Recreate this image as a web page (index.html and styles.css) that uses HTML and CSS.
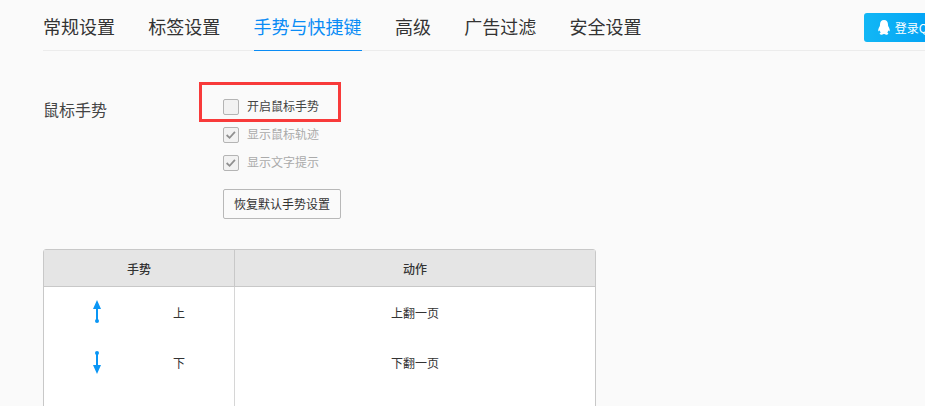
FILE: index.html
```html
<!DOCTYPE html>
<html lang="zh-CN">
<head>
<meta charset="utf-8">
<title>设置</title>
<link rel="stylesheet" href="styles.css">
</head>
<body>
<div class="page">
  <nav class="nav">
    <a class="tab">常规设置</a>
    <a class="tab">标签设置</a>
    <a class="tab active">手势与快捷键</a>
    <a class="tab">高级</a>
    <a class="tab">广告过滤</a>
    <a class="tab">安全设置</a>
    <button class="login">
      <svg class="qq" viewBox="0 0 12 15" width="12" height="15"><path d="M6 0C3.300 0 2 2 2 4.500C2 5.300 2 5.700 1.600 6.400C.8 7.800 0 9.300 .3 10.900C.5 11.500 1.200 10.900 1.600 10.200C1.800 11.100 2.200 11.900 2.800 12.500C2.100 12.800 1.500 13.200 1.800 13.900C2.100 14.600 3.500 14.800 4.700 14.600C5.100 14.500 5.400 14.300 5.500 14.100H6.500C6.600 14.300 6.900 14.500 7.300 14.600C8.500 14.800 9.900 14.600 10.200 13.900C10.500 13.200 9.900 12.800 9.200 12.500C9.800 11.900 10.200 11.100 10.400 10.200C10.800 10.900 11.500 11.500 11.700 10.900C12 9.300 11.200 7.800 10.400 6.400C10 5.700 10 5.300 10 4.500C10 2 8.700 0 6 0Z" fill="#fff"/></svg>
      <span class="login-text">登录QQ</span>
    </button>
  </nav>

  <section class="gesture">
    <div class="gesture-title">鼠标手势</div>
    <div class="options">
      <label class="option on"><span class="box"></span><span class="label">开启鼠标手势</span></label>
      <label class="option off"><span class="box"><svg viewBox="0 0 16 16" width="14" height="14"><path d="M3 8l3.400 3.200L12.500 4.500" fill="none" stroke="#8f8f8f" stroke-width="2"/></svg></span><span class="label">显示鼠标轨迹</span></label>
      <label class="option off"><span class="box"><svg viewBox="0 0 16 16" width="14" height="14"><path d="M3 8l3.400 3.200L12.500 4.500" fill="none" stroke="#8f8f8f" stroke-width="2"/></svg></span><span class="label">显示文字提示</span></label>
      <button class="reset">恢复默认手势设置</button>
      <div class="highlight"></div>
    </div>
  </section>

  <div class="table">
    <div class="row head">
      <div class="col-gesture">手势</div>
      <div class="col-action">动作</div>
    </div>
    <div class="row">
      <div class="col-gesture gesture-cell">
        <svg class="arrow" viewBox="0 0 8 24" width="8" height="24"><path d="M4 0L8 9H5V20H3V9H0Z" fill="#0a96f5"/><circle cx="4" cy="21" r="2" fill="#0a96f5"/></svg>
        <span class="dir">上</span>
      </div>
      <div class="col-action">上翻一页</div>
    </div>
    <div class="row">
      <div class="col-gesture gesture-cell">
        <svg class="arrow" viewBox="0 0 8 24" width="8" height="24"><path d="M4 24L8 15H5V4H3V15H0Z" fill="#0a96f5"/><circle cx="4" cy="3" r="2" fill="#0a96f5"/></svg>
        <span class="dir">下</span>
      </div>
      <div class="col-action">下翻一页</div>
    </div>
    <div class="row">
      <div class="col-gesture"></div>
      <div class="col-action"></div>
    </div>
  </div>
</div>
</body>
</html>
```

FILE: styles.css
```css
* { box-sizing: border-box; }
html, body { margin: 0; height: 100%; }
body {
  background: #fafafa;
  color: #333;
  font-family: "Noto Sans CJK SC", "Liberation Sans", sans-serif;
  overflow: hidden;
}
.page { width: 925px; height: 406px; overflow: hidden; padding-left: 43px; }

.nav {
  display: flex;
  width: 960px;
  height: 51px;
  border-bottom: 1px solid #ececec;
  gap: 33.300px;
  align-items: stretch;
}
.tab {
  font-size: 18px;
  line-height: 53px;
  height: 51px;
  color: #333;
  white-space: nowrap;
}
.tab.active { color: #0a8cf5; border-bottom: 1px solid #0a8cf5; }
.login {
  margin: 13px 0 0 189px;
  width: 76px;
  height: 29px;
  border: 0;
  border-radius: 3px;
  background: linear-gradient(90deg, #12b7f5, #00a0f5);
  color: #fff;
  display: flex;
  align-items: center;
  padding: 0 0 0 14px;
  font: inherit;
  font-size: 12px;
  white-space: nowrap;
}
.qq { flex: none; margin-right: 5px; }

.gesture { display: flex; padding-top: 46px; }
.gesture-title { width: 180px; font-size: 16px; line-height: 24px; color: #444; }
.options { position: relative; display: flex; flex-direction: column; align-items: flex-start; }
.option {
  display: flex;
  align-items: center;
  height: 16px;
  margin-top: 2px;
  margin-bottom: 10px;
  font-size: 12px;
  line-height: 15px;
}
.label { padding-bottom: 3px; }
.option.on { color: #444; }
.option.off { color: #aaa; }
.box {
  width: 16px;
  height: 16px;
  margin-right: 8px;
  border: 1px solid #b4b4b4;
  border-radius: 2px;
  background: #f2f2f2;
  display: flex;
  align-items: center;
  justify-content: center;
}
.reset {
  margin-top: 8px;
  width: 118px;
  height: 30px;
  padding: 0 0 1px;
  border: 1px solid #b8b8b8;
  border-radius: 2px;
  background: #fafafa;
  color: #333;
  font: inherit;
  font-size: 12px;
}
.highlight {
  position: absolute;
  left: -24px;
  top: -15px;
  width: 142px;
  height: 40px;
  border: 3px solid #f83a3a;
}

.table {
  margin-top: 30px;
  width: 553px;
  background: #fff;
  border: 1px solid #c8c8c8;
  border-radius: 3px 3px 0 0;
}
.row { display: flex; height: 50px; }
.row.head {
  height: 37px;
  background: #e5e5e5;
  border-bottom: 1px solid #c8c8c8;
  font-size: 12px;
  font-weight: 500;
}
.col-gesture {
  width: 191px;
  flex: none;
  border-right: 1px solid #d6d6d6;
  display: flex;
  align-items: center;
  justify-content: center;
  font-size: 12px;
}
.head .col-gesture { border-right-color: #c8c8c8; }
.col-action { flex: 1; display: flex; align-items: center; justify-content: center; font-size: 12px; }
.gesture-cell { justify-content: flex-start; padding-left: 49px; }
.arrow { flex: none; }
.dir { margin-left: 72px; }
```
